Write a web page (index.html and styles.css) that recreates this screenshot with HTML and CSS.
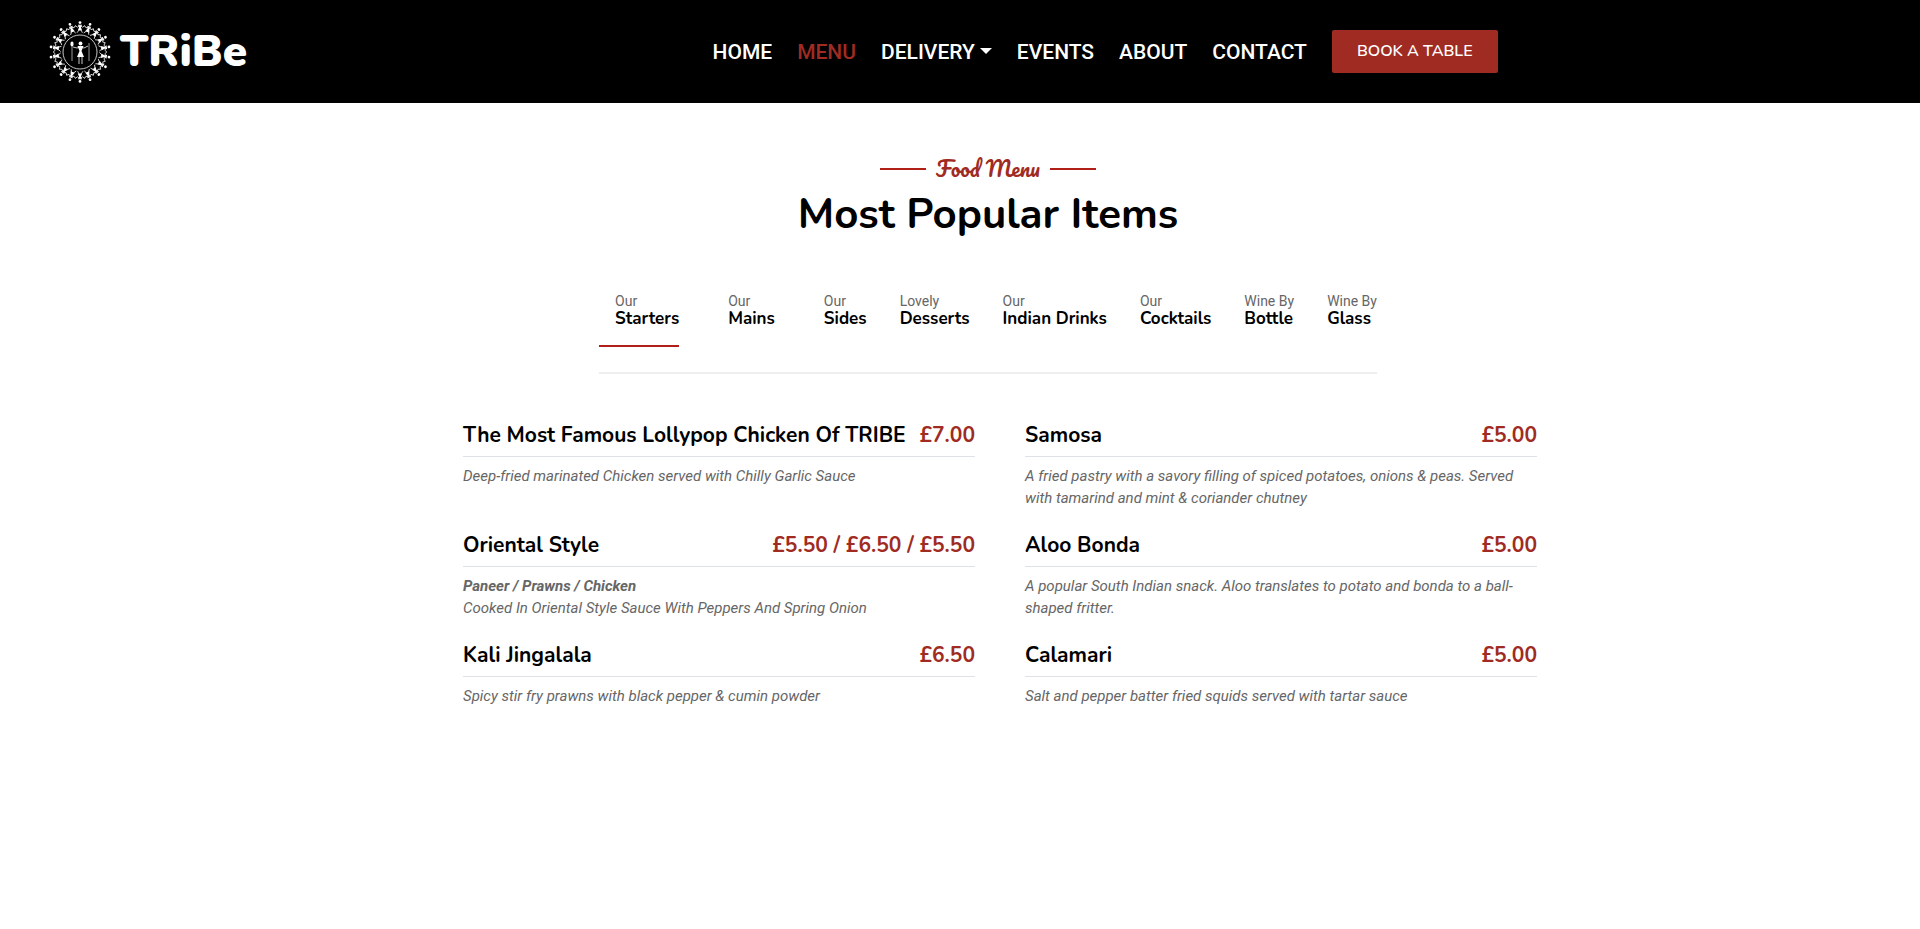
FILE: index.html
```
<!DOCTYPE html>
<html lang="en">
<head>
  <meta charset="UTF-8">
  <meta name="viewport" content="width=device-width, initial-scale=1.0">
  <title>Tribe - Menu</title>
  <link rel="stylesheet" href="styles.css">
</head>
<body>
  <header class="navbar">
    <a href="#" class="brand">
      <svg class="brand-mark" viewBox="-32 -32 64 64" aria-hidden="true">
        <defs>
          <g id="dancer">
            <circle cx="0" cy="-29.4" r="1.4" fill="#fff" stroke="none"/>
            <path d="M-2 -27.2h4L1 -24.6 2.2 -21.4h-4.4L-1 -24.6z" fill="#fff" stroke="none"/>
            <path d="M-4.8 -26.4L-2.6 -24.8 0 -26.6 2.6 -24.8 4.8 -26.4M-1 -22L-3 -19.2M1 -22L2.4 -19.2"/>
          </g>
        </defs>
        <g fill="none" stroke="#ddd" stroke-width="0.9">
          <use href="#dancer"/>
          <use href="#dancer" transform="rotate(20)"/>
          <use href="#dancer" transform="rotate(40)"/>
          <use href="#dancer" transform="rotate(60)"/>
          <use href="#dancer" transform="rotate(80)"/>
          <use href="#dancer" transform="rotate(100)"/>
          <use href="#dancer" transform="rotate(120)"/>
          <use href="#dancer" transform="rotate(140)"/>
          <use href="#dancer" transform="rotate(160)"/>
          <use href="#dancer" transform="rotate(180)"/>
          <use href="#dancer" transform="rotate(200)"/>
          <use href="#dancer" transform="rotate(220)"/>
          <use href="#dancer" transform="rotate(240)"/>
          <use href="#dancer" transform="rotate(260)"/>
          <use href="#dancer" transform="rotate(280)"/>
          <use href="#dancer" transform="rotate(300)"/>
          <use href="#dancer" transform="rotate(320)"/>
          <use href="#dancer" transform="rotate(340)"/>
          <circle r="17"/>
          <path d="M-8 -9V9M9 -9V9" stroke="#aaa"/>
          <path d="M-7 -5L-3 -4 0 -5 4 -4 8 -6M-1 4V12M2 4V12"/>
        </g>
        <g fill="#fff">
          <ellipse cx="-8" cy="-8" rx="1.6" ry="2.4"/>
          <circle cx="0.5" cy="-8.5" r="1.9"/>
          <path d="M-2.5 -6h6L1.5 -1 4 5h-7L-0.5 -1z"/>
        </g>
      </svg>
      <span class="brand-name">TRiBe</span>
    </a>
    <nav class="nav-links">
      <a href="#">HOME</a>
      <a href="#" class="active">MENU</a>
      <a href="#" class="dropdown">DELIVERY</a>
      <a href="#">EVENTS</a>
      <a href="#">ABOUT</a>
      <a href="#">CONTACT</a>
      <a href="#" class="btn-book">BOOK A TABLE</a>
    </nav>
  </header>

  <main>
    <div class="container">
      <div class="section-title">
        <h5>Food Menu</h5>
        <h1>Most Popular Items</h1>
      </div>

      <ul class="tabs">
        <li><a href="#" class="wide active"><small>Our</small><strong>Starters</strong></a></li>
        <li><a href="#" class="wide"><small>Our</small><strong>Mains</strong></a></li>
        <li><a href="#" class="wide"><small>Our</small><strong>Sides</strong></a></li>
        <li><a href="#"><small>Lovely</small><strong>Desserts</strong></a></li>
        <li><a href="#"><small>Our</small><strong>Indian Drinks</strong></a></li>
        <li><a href="#"><small>Our</small><strong>Cocktails</strong></a></li>
        <li><a href="#"><small>Wine By</small><strong>Bottle</strong></a></li>
        <li><a href="#"><small>Wine By</small><strong>Glass</strong></a></li>
      </ul>

      <div class="menu-grid">
        <div class="item">
          <h2><span>The Most Famous Lollypop Chicken Of TRIBE</span><span class="price">£7.00</span></h2>
          <p>Deep-fried marinated Chicken served with Chilly Garlic Sauce</p>
        </div>
        <div class="item">
          <h2><span>Samosa</span><span class="price">£5.00</span></h2>
          <p>A fried pastry with a savory filling of spiced potatoes, onions &amp; peas. Served with tamarind and mint &amp; coriander chutney</p>
        </div>
        <div class="item">
          <h2><span>Oriental Style</span><span class="price">£5.50 / £6.50 / £5.50</span></h2>
          <p><b>Paneer / Prawns / Chicken</b><br>Cooked In Oriental Style Sauce With Peppers And Spring Onion</p>
        </div>
        <div class="item">
          <h2><span>Aloo Bonda</span><span class="price">£5.00</span></h2>
          <p>A popular South Indian snack. Aloo translates to potato and bonda to a ball-shaped fritter.</p>
        </div>
        <div class="item">
          <h2><span>Kali Jingalala</span><span class="price">£6.50</span></h2>
          <p>Spicy stir fry prawns with black pepper &amp; cumin powder</p>
        </div>
        <div class="item">
          <h2><span>Calamari</span><span class="price">£5.00</span></h2>
          <p>Salt and pepper batter fried squids served with tartar sauce</p>
        </div>
      </div>
    </div>
  </main>
</body>
</html>
```
FILE: styles.css
```
* {
    margin: 0;
    padding: 0;
    box-sizing: border-box;
}
body {
    font-family: Roboto, sans-serif;
    font-size: 15px;
    color: #666;
    background: #fff;
}
a {
    color: inherit;
    text-decoration: none;
}

/* Navbar */
.navbar {
    display: flex;
    align-items: center;
    justify-content: space-between;
    min-height: 103px;
    padding: 0 22% 0 48px;
    background: #000;
    color: #fff;
}
.brand {
    display: flex;
    align-items: center;
    gap: 8px;
}
.brand-mark {
    width: 64px;
    height: 64px;
}
.brand-name {
    font-family: Nunito, Roboto, sans-serif;
    font-size: 44px;
    font-weight: 900;
    line-height: 64px;
}
.nav-links {
    display: flex;
    align-items: center;
    gap: 25px;
    font-size: 21px;
    font-weight: 500;
    line-height: 24px;
}
.nav-links .active {
    color: #9f2b23;
}
.dropdown::after {
    content: "";
    display: inline-block;
    margin-left: 5px;
    vertical-align: 5px;
    border-top: 6px solid;
    border-left: 6px solid transparent;
    border-right: 6px solid transparent;
}
.btn-book {
    padding: 10px 25px;
    border-radius: 2px;
    background: #9f2b23;
    font-family: Nunito, Lato, sans-serif;
    font-size: 16px;
    font-weight: 600;
    line-height: 23px;
}

/* Menu */
main {
    padding: 54px 0 48px 56px;
}
.container {
    max-width: 1098px;
    margin: 0 auto;
}
.section-title {
    text-align: center;
}
.section-title h5 {
    display: flex;
    align-items: center;
    justify-content: center;
    gap: 10px;
    font-family: Pacifico, "Liberation Serif", serif;
    font-size: 21px;
    font-weight: 400;
    line-height: 24px;
    color: #9f2b23;
}
.section-title h5::before,
.section-title h5::after {
    content: "";
    width: 46px;
    height: 2px;
    background: #b02018;
}
.section-title h1 {
    margin-top: 10px;
    font-family: Nunito, "Open Sans", sans-serif;
    font-size: 42px;
    font-weight: 700;
    line-height: 48px;
    color: #000;
}
.tabs {
    display: flex;
    gap: 33px;
    width: fit-content;
    margin: 47px auto 0;
    padding-bottom: 25px;
    border-bottom: 2px solid #eee;
    list-style: none;
}
.tabs a {
    display: block;
    padding: 7px 0 18px;
    border-bottom: 2px solid transparent;
}
.tabs a.wide {
    padding-left: 16px;
}
.tabs a.active {
    border-color: #b02018;
}
.tabs small,
.tabs strong {
    display: block;
    line-height: 17px;
}
.tabs small {
    font-size: 14px;
}
.tabs strong {
    font-family: Nunito, Lato, sans-serif;
    font-size: 17px;
    color: #000;
}
.menu-grid {
    display: grid;
    grid-template-columns: 1fr 1fr;
    gap: 24px 50px;
    margin-top: 49px;
    padding-left: 24px;
}
.item h2 {
    display: flex;
    justify-content: space-between;
    padding-bottom: 9px;
    border-bottom: 1px solid #dee2e6;
    font-family: Nunito, "Open Sans", sans-serif;
    font-size: 21px;
    line-height: 24px;
    color: #000;
}
.item .price {
    color: #9f2b23;
}
.item p {
    padding: 8px 16px 0 0;
    font-style: italic;
    line-height: 22px;
}
@media (max-width: 992px) {
    .navbar,
    .nav-links,
    .tabs {
        flex-wrap: wrap;
    }
    .navbar,
    main {
        padding: 24px;
    }
    .menu-grid {
        grid-template-columns: 1fr;
        padding-left: 0;
    }
}
```
